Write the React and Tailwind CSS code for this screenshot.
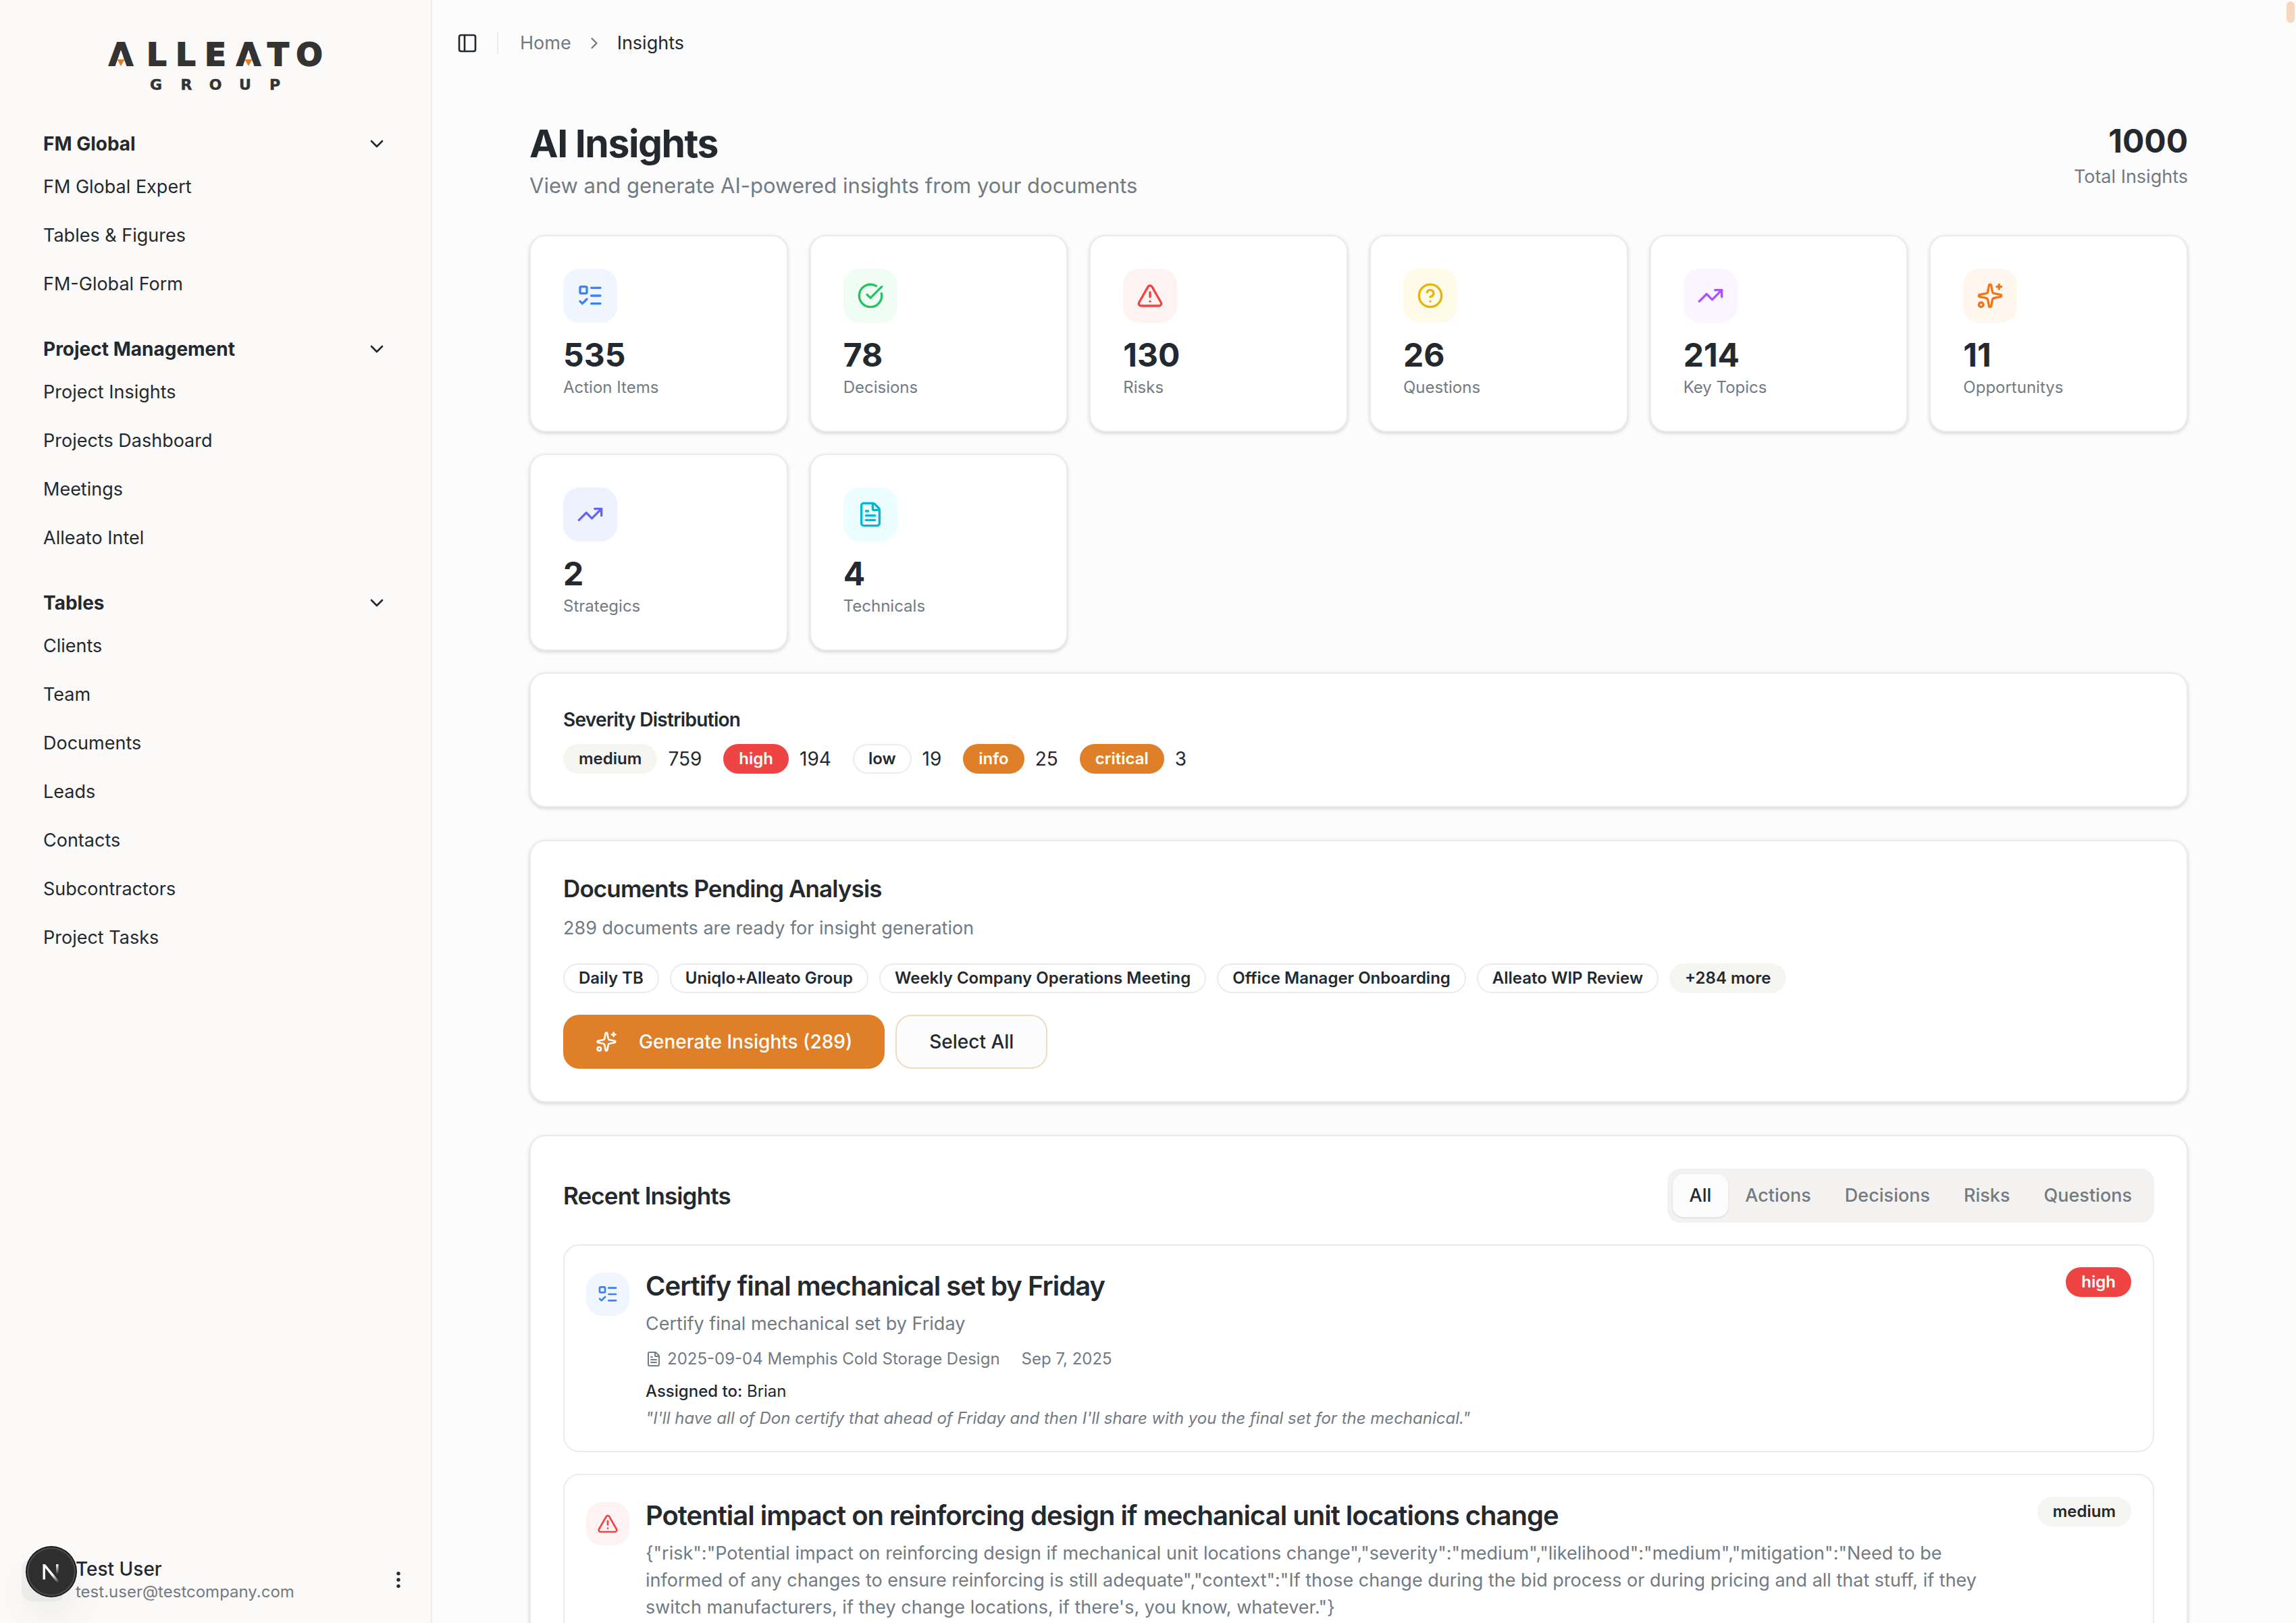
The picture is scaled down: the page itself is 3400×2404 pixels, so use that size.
import {
  ListTodo, CircleCheckBig, TriangleAlert, CircleQuestionMark, TrendingUp, Sparkles,
  FileText, ChevronDown, ChevronRight, PanelLeft, EllipsisVertical,
} from "lucide-react";

const nav = [
  { title: "FM Global", items: ["FM Global Expert", "Tables & Figures", "FM-Global Form"] },
  { title: "Project Management", items: ["Project Insights", "Projects Dashboard", "Meetings", "Alleato Intel"] },
  { title: "Tables", items: ["Clients", "Team", "Documents", "Leads", "Contacts", "Subcontractors", "Project Tasks"] },
];

const stats = [
  { icon: ListTodo, tone: "bg-[#eff6ff] text-[#3b82f6]", value: 535, label: "Action Items" },
  { icon: CircleCheckBig, tone: "bg-[#f0fdf4] text-[#22c55e]", value: 78, label: "Decisions" },
  { icon: TriangleAlert, tone: "bg-[#fef2f2] text-[#ef4444]", value: 130, label: "Risks" },
  { icon: CircleQuestionMark, tone: "bg-[#fefce8] text-[#eab308]", value: 26, label: "Questions" },
  { icon: TrendingUp, tone: "bg-[#faf5ff] text-[#a855f7]", value: 214, label: "Key Topics" },
  { icon: Sparkles, tone: "bg-[#fff7ed] text-[#f97316]", value: 11, label: "Opportunitys" },
  { icon: TrendingUp, tone: "bg-[#eef2ff] text-[#6366f1]", value: 2, label: "Strategics" },
  { icon: FileText, tone: "bg-[#ecfeff] text-[#06b6d4]", value: 4, label: "Technicals" },
];

const severities = [
  ["medium", 759],
  ["high", 194],
  ["low", 19],
  ["info", 25],
  ["critical", 3],
];

const severityTone = {
  medium: "secondary",
  high: "destructive",
  low: "outline",
  info: "primary",
  critical: "primary",
};

const badgeTone = {
  secondary: "border-transparent bg-[#f5f5f2] text-[#23292e]",
  destructive: "border-transparent bg-[#ef4444] text-white",
  outline: "border-[#ebebeb] text-[#23292e]",
  primary: "border-transparent bg-[#df8029] text-white",
};

const documents = [
  "Daily TB",
  "Uniqlo+Alleato Group",
  "Weekly Company Operations Meeting",
  "Office Manager Onboarding",
  "Alleato WIP Review",
];

const tabs = ["All", "Actions", "Decisions", "Risks", "Questions"];

function Badge({ tone, children }) {
  return (
    <span className={`inline-flex h-11 shrink-0 items-center rounded-full border-2 px-[21px] text-[24px] leading-8 font-semibold whitespace-nowrap ${badgeTone[tone]}`}>
      {children}
    </span>
  );
}

function Card({ children }) {
  return (
    <section className="rounded-3xl border-2 border-[#ebebeb] bg-white p-12 shadow-[0_2px_6px_rgba(0,0,0,0.1),0_2px_4px_rgba(0,0,0,0.06)]">
      {children}
    </section>
  );
}

function Logo() {
  return (
    <svg role="img" aria-label="Alleato Group" viewBox="0 0 320 74" className="h-[74px] w-80 overflow-visible" fontFamily="DejaVu Sans" fontWeight="700" fill="#333333" textAnchor="middle">
      <text y="35" fontSize="46" x="20 73 116 160 209 253 299" stroke="#333333" strokeWidth="2">ALLEATO</text>
      <path d="M20 12 28.500 36.500H11.500z M209 12 217.500 36.500H200.500z" fill="#fbfaf8" />
      <path d="M14.500 26H25.500L20 36z M203.500 26H214.500L209 36z" fill="#df8029" />
      <text y="71" fontSize="22" x="72 117 160 204 248" stroke="#333333" strokeWidth="0.500">GROUP</text>
    </svg>
  );
}

function Sidebar() {
  return (
    <aside className="flex w-[640px] shrink-0 flex-col border-r-2 border-[#ebebeb] bg-[#fbfaf8]">
      <div className="flex h-[181px] shrink-0 justify-center pt-[62px]">
        <Logo />
      </div>
      <nav className="flex flex-1 flex-col gap-8 px-16">
        {nav.map((group) => (
          <div key={group.title}>
            <button type="button" className="flex h-16 w-full items-center justify-between text-[28px] font-bold">
              {group.title}
              <ChevronDown size={32} />
            </button>
            <ul className="flex flex-col gap-2">
              {group.items.map((item) => (
                <li key={item}>
                  <a href="#" className="flex h-16 items-center">{item}</a>
                </li>
              ))}
            </ul>
          </div>
        ))}
      </nav>
      <div className="relative p-4">
        <button type="button" className="flex h-24 w-full items-center gap-4 px-4 text-left">
          <span className="size-16 shrink-0 rounded-2xl bg-[#f0f0ef]" />
          <span className="flex-1">
            <span className="block text-[28px] leading-[35px] font-medium">Test User</span>
            <span className="block text-[24px] leading-8 text-[#727a82]">test.user@testcompany.com</span>
          </span>
          <EllipsisVertical size={32} />
        </button>
        <span className="absolute bottom-10 left-10 flex size-[72px] items-center justify-center rounded-full bg-[#2e2e2e] shadow-[0_0_0_2px_#171717,inset_0_0_0_2px_#4d4d4d,0_32px_64px_-16px_rgba(0,0,0,0.2)]">
          <svg width="32" height="32" viewBox="0 0 32 32" fill="none" aria-hidden="true" className="overflow-visible">
            <defs>
              <linearGradient id="diag" x1="18" y1="20" x2="27" y2="32" gradientUnits="userSpaceOnUse">
                <stop stopColor="#fff" />
                <stop offset="1" stopColor="#fff" stopOpacity="0" />
              </linearGradient>
              <linearGradient id="stem" x1="25" y1="5" x2="25" y2="20" gradientUnits="userSpaceOnUse">
                <stop stopColor="#fff" />
                <stop offset="1" stopColor="#fff" stopOpacity="0" />
              </linearGradient>
            </defs>
            <path d="M3.500 5H7L28 30.500L25 33L3.500 6z" fill="url(#diag)" />
            <path d="M3.500 5H7V27.500H3.500z" fill="#fff" />
            <path d="M23 5H26.500V21H23z" fill="url(#stem)" />
          </svg>
        </span>
      </div>
    </aside>
  );
}

function Insight({ icon: Icon, tone, title, severity, text, children }) {
  return (
    <article className="flex items-start gap-6 rounded-3xl border-2 border-[#ebebeb] p-8">
      <span className={`mt-2 flex size-16 shrink-0 items-center justify-center rounded-3xl ${tone}`}>
        <Icon size={32} />
      </span>
      <div className="flex flex-1 items-start justify-between gap-8">
        <div className="flex-1">
          <h3 className="text-[40px] leading-[56px] font-semibold tracking-tight">{title}</h3>
          <p className="mt-2 text-[#727a82]">{text}</p>
          {children}
        </div>
        <Badge tone={severityTone[severity]}>{severity}</Badge>
      </div>
    </article>
  );
}

function Meta({ document, date }) {
  return (
    <div className="mt-4 flex items-center gap-8 text-[24px] leading-8 text-[#727a82]">
      <span className="flex items-center gap-2">
        <FileText size={24} />
        {document}
      </span>
      <time>{date}</time>
    </div>
  );
}

export default function App() {
  return (
    <div className="flex h-screen overflow-hidden bg-[#fcfcfc] font-['Inter',sans-serif] text-[27px] leading-10 text-[#23292e]">
      <Sidebar />
      <div className="min-w-0 flex-1 overflow-hidden">
        <header className="flex h-32 items-center gap-4 px-6">
          <button type="button" aria-label="Toggle sidebar" className="flex size-14 items-center justify-center">
            <PanelLeft size={32} />
          </button>
          <span className="mr-4 h-8 w-0.5 bg-[#ebebeb]" />
          <nav aria-label="Breadcrumb" className="flex items-center gap-5">
            <a href="#" className="text-[#727a82]">Home</a>
            <ChevronRight size={28} className="text-[#727a82]" />
            <span>Insights</span>
          </nav>
        </header>

        <main className="flex flex-col gap-12 px-36 pt-12">
          <div>
            <div className="flex items-start justify-between pb-12">
              <div>
                <h1 className="text-[57px] leading-[74px] font-bold tracking-tight">AI Insights</h1>
                <p className="text-[31px] leading-[50px] text-[#727a82]">View and generate AI-powered insights from your documents</p>
              </div>
              <div className="text-right">
                <div className="text-[48px] leading-[66px] font-bold">1000</div>
                <div className="text-[#727a82]">Total Insights</div>
              </div>
            </div>

            <div className="flex flex-col gap-8">
              <div className="grid grid-cols-6 gap-8">
                {stats.map(({ icon: Icon, tone, value, label }) => (
                  <Card key={label}>
                    <span className={`flex size-20 items-center justify-center rounded-3xl ${tone}`}>
                      <Icon size={40} />
                    </span>
                    <div className="mt-4 text-[48px] leading-[64px] font-bold">{value}</div>
                    <div className="text-[24px] leading-8 text-[#727a82]">{label}</div>
                  </Card>
                ))}
              </div>
              <Card>
                <h2 className="text-[28px] font-semibold tracking-tight">Severity Distribution</h2>
                <div className="mt-4 flex flex-wrap gap-8">
                  {severities.map(([name, count]) => (
                    <div key={name} className="flex items-center gap-4">
                      <Badge tone={severityTone[name]}>{name}</Badge>
                      <span className="text-[28px]">{count}</span>
                    </div>
                  ))}
                </div>
              </Card>
            </div>
          </div>

          <Card>
            <h2 className="text-[35px] leading-[45px] font-semibold tracking-tight">Documents Pending Analysis</h2>
            <p className="mt-4 text-[#727a82]">289 documents are ready for insight generation</p>
            <div className="mt-8 flex flex-wrap gap-4">
              {documents.map((name) => (
                <Badge key={name} tone="outline">{name}</Badge>
              ))}
              <Badge tone="secondary">+284 more</Badge>
            </div>
            <div className="mt-8 flex gap-4 text-[28px] font-medium">
              <button type="button" className="flex h-20 items-center gap-8 rounded-3xl bg-[#df8029] px-12 text-white">
                <Sparkles size={32} />
                Generate Insights (289)
              </button>
              <button type="button" className="flex h-20 items-center rounded-3xl border-2 border-[#f4d9bf] bg-[#fcfcfc] px-12">
                Select All
              </button>
            </div>
          </Card>

          <Card>
            <div className="flex items-center justify-between">
              <h2 className="text-[35px] leading-[45px] font-semibold tracking-tight">Recent Insights</h2>
              <div role="tablist" className="flex h-20 items-center rounded-[20px] bg-[#f3f2f0] px-2 font-medium text-[#727a82]">
                {tabs.map((tab, i) => (
                  <button
                    key={tab}
                    type="button"
                    role="tab"
                    aria-selected={i === 0}
                    className={`h-16 rounded-2xl px-[25px] ${i === 0 ? "bg-[#fcfcfc] text-[#23292e] shadow-sm" : ""}`}
                  >
                    {tab}
                  </button>
                ))}
              </div>
            </div>
            <div className="mt-8 flex flex-col gap-8">
              <Insight
                icon={ListTodo}
                tone="bg-[#eff6ff] text-[#3b82f6]"
                title="Certify final mechanical set by Friday"
                severity="high"
                text="Certify final mechanical set by Friday"
              >
                <Meta document="2025-09-04 Memphis Cold Storage Design" date="Sep 7, 2025" />
                <p className="mt-4 text-[24px] leading-8">
                  <span className="font-medium">Assigned to:</span> Brian
                </p>
                <p className="mt-2 text-[24px] leading-8 text-[#727a82] italic">
                  "I'll have all of Don certify that ahead of Friday and then I'll share with you the final set for the mechanical."
                </p>
              </Insight>
              <Insight
                icon={TriangleAlert}
                tone="bg-[#fef2f2] text-[#ef4444]"
                title="Potential impact on reinforcing design if mechanical unit locations change"
                severity="medium"
                text={`{"risk":"Potential impact on reinforcing design if mechanical unit locations change","severity":"medium","likelihood":"medium","mitigation":"Need to be informed of any changes to ensure reinforcing is still adequate","context":"If those change during the bid process or during pricing and all that stuff, if they switch manufacturers, if they change locations, if there's, you know, whatever."}`}
              />
            </div>
          </Card>
        </main>
      </div>
      <div className="w-4 shrink-0 bg-[#fbfbf9] p-0.5" aria-hidden="true">
        <div className="h-8 rounded-full bg-[#f4d7bd]" />
      </div>
    </div>
  );
}
